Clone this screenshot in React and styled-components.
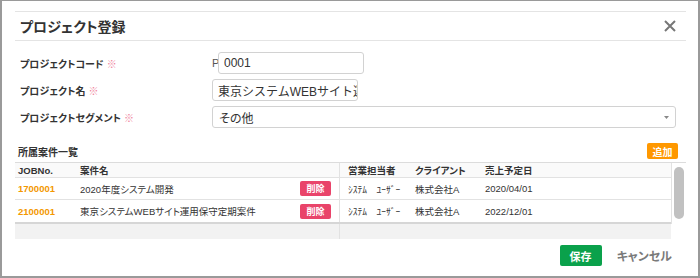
import React from "react";
import styled, { createGlobalStyle } from "styled-components";

const GlobalStyle = createGlobalStyle`
  html, body {
    margin: 0;
    padding: 0;
    background: #ffffff;
  }
  body {
    font-family: "Liberation Sans", "Noto Sans CJK JP", sans-serif;
    font-feature-settings: "palt";
    color: #333333;
  }
  * {
    box-sizing: border-box;
  }
`;

const Frame = styled.div`
  width: 700px;
  height: 278px;
  border: 2px solid #9a9a9a;
  border-top-width: 1px;
  padding: 10px 12px 0 13px;
  background: #fff;
  overflow: hidden;
`;

const Modal = styled.div`
  border-top: 1px solid #e4e4e4;
  display: flex;
  flex-direction: column;
`;

const Header = styled.div`
  height: 29px;
  border-bottom: 1px solid #e4e4e4;
  display: flex;
  align-items: center;
  justify-content: space-between;
  padding: 0 10px 0 5px;
`;

const Title = styled.div`
  font-size: 14px;
  font-weight: bold;
  color: #333;
`;

const CloseButton = styled.button`
  border: none;
  background: none;
  padding: 0;
  width: 12px;
  height: 12px;
  display: flex;
  cursor: pointer;
`;

const Form = styled.div`
  display: flex;
  flex-direction: column;
  gap: 5px;
  padding: 11px 0 0 5px;
`;

const FormRow = styled.div`
  display: flex;
  align-items: center;
  height: 22px;
`;

const Label = styled.div`
  width: 192px;
  font-size: 10px;
  font-weight: bold;
  color: #333;
`;

const Required = styled.span`
  color: #f0829c;
  margin-left: 3px;
  font-weight: normal;
`;

const Prefix = styled.span`
  font-size: 11px;
  color: #555;
  width: 6px;
`;

const TextInput = styled.input`
  width: ${(p) => p.$width}px;
  height: 22px;
  border: 1px solid #d2d2d2;
  border-radius: 3px;
  padding: 0 0 0 5px;
  margin: 0;
  font-family: "Liberation Sans", "Noto Sans CJK JP", sans-serif;
  font-size: 12px;
  color: #333;
  outline: none;
  background: #fff;
`;

const Select = styled.div`
  width: 464px;
  height: 22px;
  border: 1px solid #d2d2d2;
  border-radius: 3px;
  padding: 0 6px 0 6px;
  font-size: 12px;
  color: #333;
  display: flex;
  align-items: center;
  justify-content: space-between;
`;

const SectionRow = styled.div`
  display: flex;
  align-items: center;
  justify-content: space-between;
  height: 16px;
  margin-top: 15px;
  padding: 0 8px 0 3px;
`;

const SectionTitle = styled.div`
  font-size: 10px;
  font-weight: bold;
`;

const SmallButton = styled.button`
  border: none;
  border-radius: 2px;
  background: ${(p) => p.$bg};
  color: #fff;
  font-family: inherit;
  font-feature-settings: "palt";
  font-weight: bold;
  font-size: ${(p) => p.$size || 10}px;
  width: ${(p) => p.$w}px;
  height: ${(p) => p.$h}px;
  padding: 0;
  cursor: pointer;
`;

const TableBox = styled.div`
  margin-top: 3px;
  display: flex;
  border-top: 1px solid #dcdcdc;
`;

const TableMain = styled.div`
  flex: 1;
  border-bottom: 2px solid #d6d6d6;
`;

const Row = styled.div`
  display: grid;
  grid-template-columns: 65px 220px 40px 75px 70px 1fr;
  align-items: center;
  height: ${(p) => p.$h}px;
  border-bottom: ${(p) => (p.$last ? "none" : "1px solid #e2e2e2")};
  background: ${(p) => p.$bg || "#fff"};
  font-size: 9.5px;
  font-weight: ${(p) => (p.$head ? "bold" : "normal")};
`;

const Cell = styled.div`
  height: 100%;
  display: flex;
  align-items: center;
  padding-left: ${(p) => p.$pad || 0}px;
  color: ${(p) => p.$color || "#333"};
  font-weight: ${(p) => (p.$bold ? "bold" : "inherit")};
  border-right: ${(p) => (p.$divider ? "1px solid #e2e2e2" : "none")};
  white-space: nowrap;
`;

const ScrollTrack = styled.div`
  width: 15px;
  border-left: 1px solid #e2e2e2;
  padding: 4px 2px 3px 2px;
  display: flex;
`;

const ScrollThumb = styled.div`
  width: 100%;
  height: 52px;
  border-radius: 5px;
  background: #c1c1c1;
`;

const FooterBar = styled.div`
  height: 15px;
  margin-right: 15px;
  background: #f2f2f2;
  display: grid;
  grid-template-columns: 325px 1fr;
`;

const FooterCell = styled.div`
  border-right: ${(p) => (p.$divider ? "1px solid #e2e2e2" : "none")};
`;

const Actions = styled.div`
  display: flex;
  justify-content: flex-end;
  align-items: center;
  gap: 15px;
  margin-top: 6px;
  padding-right: 14px;
`;

const CancelLink = styled.button`
  border: none;
  background: none;
  padding: 0;
  font-family: inherit;
  font-feature-settings: "palt";
  font-size: 12px;
  font-weight: bold;
  color: #7a7a7a;
  cursor: pointer;
`;

const rows = [
  {
    job: "1700001",
    name: "2020年度システム開発",
    user: "ｼｽﾃﾑ　ﾕｰｻﾞｰ",
    client: "株式会社A",
    date: "2020/04/01",
  },
  {
    job: "2100001",
    name: "東京システムWEBサイト運用保守定期案件",
    user: "ｼｽﾃﾑ　ﾕｰｻﾞｰ",
    client: "株式会社A",
    date: "2022/12/01",
  },
];

function CloseIcon() {
  return (
    <svg width="12" height="12" viewBox="0 0 12 12">
      <path d="M1 1 L11 11 M11 1 L1 11" stroke="#777" strokeWidth="2" />
    </svg>
  );
}

function Caret() {
  return (
    <svg width="5" height="3" viewBox="0 0 5 3">
      <path d="M0 0 L5 0 L2.5 3 Z" fill="#888" />
    </svg>
  );
}

export default function App() {
  return (
    <>
      <GlobalStyle />
      <Frame>
        <Modal>
          <Header>
            <Title>プロジェクト登録</Title>
            <CloseButton>
              <CloseIcon />
            </CloseButton>
          </Header>

          <Form>
            <FormRow>
              <Label>
                プロジェクトコード<Required>※</Required>
              </Label>
              <Prefix>P</Prefix>
              <TextInput $width={146} readOnly value="0001" />
            </FormRow>
            <FormRow>
              <Label>
                プロジェクト名<Required>※</Required>
              </Label>
              <TextInput
                $width={146}
                readOnly
                value="東京システムWEBサイト運用保守定期案件"
              />
            </FormRow>
            <FormRow>
              <Label>
                プロジェクトセグメント<Required>※</Required>
              </Label>
              <Select>
                その他
                <Caret />
              </Select>
            </FormRow>
          </Form>

          <SectionRow>
            <SectionTitle>所属案件一覧</SectionTitle>
            <SmallButton $bg="#ff9800" $w={31} $h={16}>
              追加
            </SmallButton>
          </SectionRow>

          <TableBox>
            <TableMain>
              <Row $h={15} $head $bg="#fafafa">
                <Cell $pad={3}>JOBNo.</Cell>
                <Cell>案件名</Cell>
                <Cell $divider />
                <Cell $pad={8}>営業担当者</Cell>
                <Cell>クライアント</Cell>
                <Cell>売上予定日</Cell>
              </Row>
              {rows.map((r, i) => (
                <Row key={r.job} $h={22} $last={i === rows.length - 1}>
                  <Cell $pad={3} $color="#f39800" $bold>
                    {r.job}
                  </Cell>
                  <Cell>{r.name}</Cell>
                  <Cell $divider>
                    <SmallButton $bg="#e9446a" $w={31} $h={15} $size={9}>
                      削除
                    </SmallButton>
                  </Cell>
                  <Cell $pad={8}>{r.user}</Cell>
                  <Cell>{r.client}</Cell>
                  <Cell>{r.date}</Cell>
                </Row>
              ))}
            </TableMain>
            <ScrollTrack>
              <ScrollThumb />
            </ScrollTrack>
          </TableBox>
          <FooterBar>
            <FooterCell $divider />
            <FooterCell />
          </FooterBar>

          <Actions>
            <SmallButton $bg="#0aa14b" $w={42} $h={21} $size={11}>
              保存
            </SmallButton>
            <CancelLink>キャンセル</CancelLink>
          </Actions>
        </Modal>
      </Frame>
    </>
  );
}
